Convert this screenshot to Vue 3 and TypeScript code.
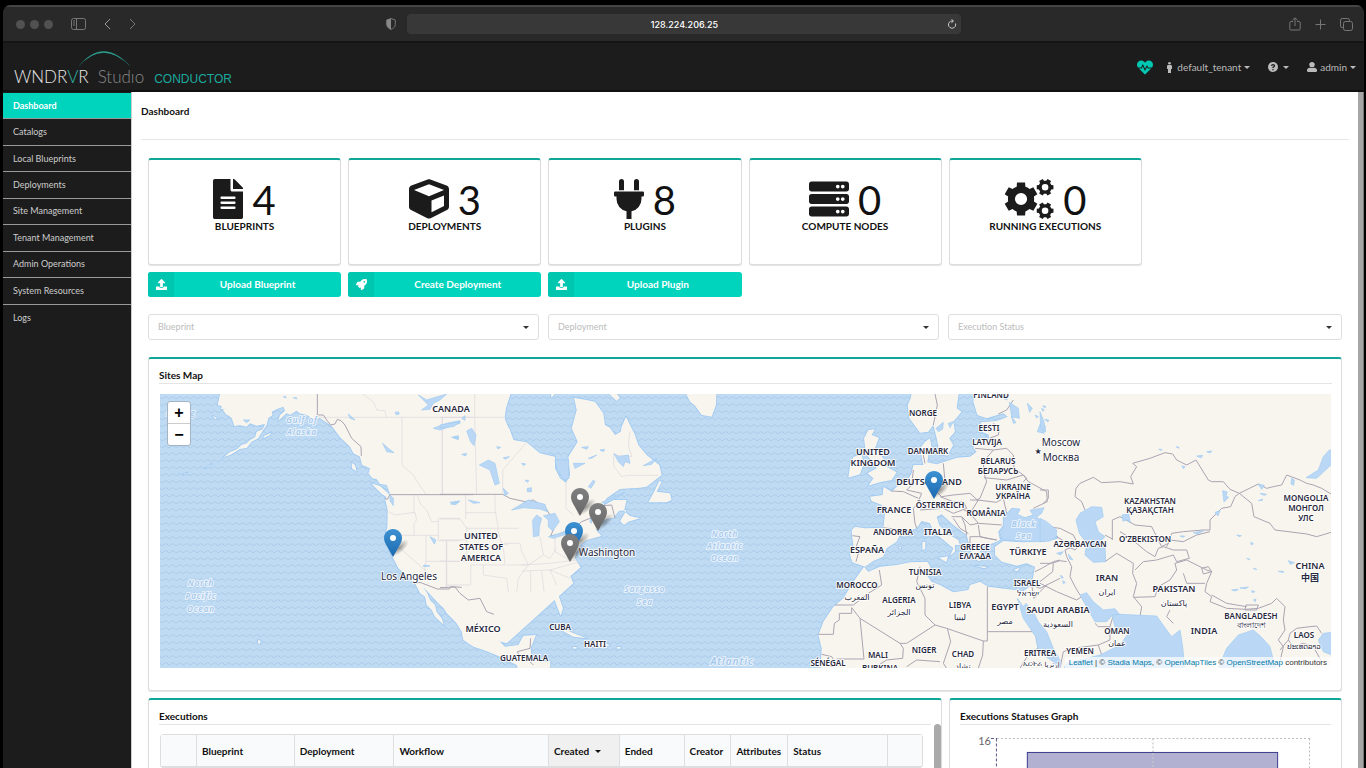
<script setup lang="ts">
import { ref } from 'vue'

interface Label { x: number; y: number; lines: string[]; size?: number; kind?: string; gap?: number }
interface Sheet { transform: string; paths: string[] }

const navItems = ['Dashboard', 'Catalogs', 'Local Blueprints', 'Deployments', 'Site Management', 'Tenant Management', 'Admin Operations', 'System Resources', 'Logs']

/* Closed outline of a toothed wheel with a round hole. */
function gear(cx: number, cy: number, outer: number, root: number, hole: number, turn: number): string {
  const teeth = 6
  const pts: string[] = []
  for (let i = 0; i < teeth; i++) {
    const a = turn + (i * 2 * Math.PI) / teeth
    const shape: [number, number][] = [[-0.34, root], [-0.24, outer], [0.24, outer], [0.34, root], [0.52, root]]
    for (const [d, r] of shape) {
      pts.push(`${(cx + r * Math.sin(a + d)).toFixed(1)} ${(cy - r * Math.cos(a + d)).toFixed(1)}`)
    }
  }
  return `M${pts.join('L')}ZM${cx - hole} ${cy}a${hole} ${hole} 0 1 0 ${hole * 2} 0a${hole} ${hole} 0 1 0 ${-hole * 2} 0Z`
}

function rack(y: number): string {
  return `M480 ${y + 128}H32c-17.700 0-32-14.300-32-32V${y + 32}c0-17.700 14.300-32 32-32h448c17.700 0 32 14.300 32 32v64c0 17.700-14.300 32-32 32zm-48-88c-13.300 0-24 10.700-24 24s10.700 24 24 24 24-10.700 24-24-10.700-24-24-24zm-64 0c-13.300 0-24 10.700-24 24s10.700 24 24 24 24-10.700 24-24-10.700-24-24-24z`
}

const uploadIcon = 'M296 384h-80c-13.300 0-24-10.700-24-24V192h-87.700c-17.800 0-26.700-21.500-14.100-34.100L242.300 5.700c7.500-7.500 19.800-7.500 27.300 0l152.200 152.200c12.600 12.600 3.700 34.100-14.100 34.100H320v168c0 13.300-10.700 24-24 24zm216-8v112c0 13.300-10.700 24-24 24H24c-13.300 0-24-10.700-24-24V376c0-13.300 10.700-24 24-24h136v8c0 30.900 25.100 56 56 56h80c30.900 0 56-25.100 56-56v-8h136c13.300 0 24 10.700 24 24z'
const rocketIcon = 'M505.100 19.100c-1.200-5.500-6.600-11-12.200-12.200C460.700 0 435.500 0 410.400 0 307.200 0 245.300 55.200 199 128H94.800c-16.300 0-35.500 11.900-42.900 26.500L2.500 253.300A28.400 28.400 0 0 0 0 264a24 24 0 0 0 24 24h103.800l-22.500 22.500c-11.300 11.300-13 32.200 0 45.200l50.900 50.900c11.200 11.200 32.200 13.200 45.300 0l22.500-22.400V488a24 24 0 0 0 24 24 28.600 28.600 0 0 0 10.700-2.500l98.700-49.400c14.600-7.300 26.500-26.500 26.500-42.900V312.800c72.600-46.300 128.100-108.400 128.100-211.100.1-25.200.1-50.400-6.900-82.600zM384 168a40 40 0 1 1 40-40 40 40 0 0 1-40 40z'

const stats = [
  { label: 'BLUEPRINTS', value: 4, w: 384, path: 'M224 136V0H24C10.700 0 0 10.700 0 24v464c0 13.300 10.700 24 24 24h336c13.300 0 24-10.700 24-24V160H248c-13.200 0-24-10.800-24-24zm64 236c0 6.600-5.400 12-12 12H108c-6.600 0-12-5.400-12-12v-8c0-6.600 5.400-12 12-12h168c6.600 0 12 5.400 12 12v8zm0-64c0 6.600-5.400 12-12 12H108c-6.600 0-12-5.400-12-12v-8c0-6.600 5.400-12 12-12h168c6.600 0 12 5.400 12 12v8zm0-72v8c0 6.600-5.400 12-12 12H108c-6.600 0-12-5.400-12-12v-8c0-6.600 5.400-12 12-12h168c6.600 0 12 5.400 12 12zm96-114.100v6.100H256V0h6.100c6.400 0 12.500 2.500 17 7l97.900 98c4.500 4.500 7 10.600 7 16.900z' },
  { label: 'DEPLOYMENTS', value: 3, w: 512, path: 'M239.100 6.300l-208 78c-18.700 7-31.100 25-31.100 45v225.100c0 18.200 10.300 34.800 26.500 42.900l208 104c13.500 6.800 29.400 6.800 42.900 0l208-104c16.300-8.100 26.500-24.800 26.500-42.900V129.300c0-20-12.400-37.900-31.100-44.900l-208-78C262 2.200 250 2.200 239.100 6.300zM256 68.400l192 72v1.100l-192 78-192-78v-1.100l192-72zm32 356V275.500l160-65v133.900l-160 80z' },
  { label: 'PLUGINS', value: 8, w: 384, path: 'M320 32a32 32 0 0 0-64 0v112h64zM368 160H16a16 16 0 0 0-16 16v32a16 16 0 0 0 16 16h16v32a160 160 0 0 0 128 156.800V512h64v-99.200A160 160 0 0 0 352 256v-32h16a16 16 0 0 0 16-16v-32a16 16 0 0 0-16-16zM128 32a32 32 0 0 0-64 0v112h64z' },
  { label: 'COMPUTE NODES', value: 0, w: 512, path: rack(32) + rack(192) + rack(352) },
  { label: 'RUNNING EXECUTIONS', value: 0, w: 640, path: gear(218, 256, 218, 168, 78, 0) + gear(526, 106, 110, 84, 42, Math.PI / 6) + gear(526, 406, 110, 84, 42, Math.PI / 6) }
]

const actions = [
  { label: 'Upload Blueprint', icon: uploadIcon },
  { label: 'Create Deployment', icon: rocketIcon },
  { label: 'Upload Plugin', icon: uploadIcon }
]

const filters = ['Blueprint', 'Deployment', 'Execution Status']
const chosen = ref<string[]>(['', '', ''])
const address = ref('128.224.206.25')

const pacific = 'translate(-20 -44) scale(.33333)'
const atlantic = 'translate(280 -9) scale(.33333)'
const europe = 'translate(580 -9) scale(.33333)'
const asia = 'translate(880 -44) scale(.33333)'

const land: Sheet[] = [
  { transform: pacific, paths: [
    'M248 100L236 150 233 165 245 168 243 178 262 176 257 190 275 205 283 228 300 226 320 230 330 220 350 227 375 222 368 238 350 245 345 262 330 270 320 280 305 284 290 298 270 306 250 322 272 314 300 297 320 294 335 275 355 265 360 255 380 225 385 205 398 195 395 185 410 178 430 170 435 182 420 195 415 212 440 190 450 195 470 182 478 190 500 195 520 208 540 205 575 228 600 262 630 290 640 310 660 320 666 345 690 355 685 370 697 385 710 388 720 402 740 405 750 432 735 445 743 480 742 530 735 560 755 615 775 655 800 678 825 700 840 730 855 740 860 765 875 780 885 800 912 826 905 805 890 785 885 765 870 750 862 730 850 712 870 715 880 740 905 765 920 790 950 820 975 850 1100 880 1300 700 1050 100Z',
    'M693 400L720 408 745 430 748 446 725 432Z', 'M635 338L645 345 650 365 636 355Z', 'M218 198L232 203 225 207Z', 'M370 265L390 255 393 248 372 258Z', 'M248 180l12-5 12 8-10 14z', 'M354 870l8 2-2 10-6-2z', 'M195 355l20-13-5 6z', 'M130 372l12-4-6 5z'
  ] },
  { transform: atlantic, paths: [
    'M-150 0L-150 500 0 660 35 690 65 740 70 765 100 785 130 795 180 815 230 840 240 880 330 880 331 828 305 830 275 820 272 790 288 750 250 752 235 780 195 785 175 765 160 720 158 670 165 655 190 635 210 628 225 636 250 632 270 640 285 625 315 620 340 628 347 655 362 692 369 670 352 620 358 600 395 570 422 547 405 520 410 500 420 480 440 465 485 453 468 435 490 405 520 398 537 378 560 375 540 408 552 420 565 410 600 400 570 393 552 378 560 345 520 345 490 362 500 340 540 312 600 308 620 305 665 270 658 240 620 210 595 180 585 150 575 130 558 95 545 125 542 140 525 150 510 128 495 120 490 85 465 50 440 45 402 38 410 75 395 130 413 170 385 215 390 270 378 293 360 280 345 250 345 215 300 205 260 172 220 165 208 130 190 125 198 70 220 0Z',
    'M658 288L665 290 650 320 690 325 695 345 680 352 625 352 640 325Z', 'M735 20L750 50 765 62 785 90 815 95 828 60 830 0 735 0Z', 'M335 715L372 720 390 740 440 760 400 755 375 742Z', 'M445 768L490 770 510 782 470 787 435 785Z', 'M500 20L530 48 540 38 525 20Z', 'M530 786l12 0 0 5-12 0z', 'M398 786l12 0 0 5-12 0z', 'M330 20l20 0-15 18z'
  ] },
  { transform: europe, paths: [
    'M520 0L512 40 503 60 508 100 540 143 565 140 580 120 590 160 600 208 622 212 640 180 628 160 645 140 640 110 665 80 650 70 660 0Z',
    'M705 0L700 50 712 90 740 100 790 85 803 95 770 108 722 112 725 140 747 150 745 165 705 165 700 190 710 200 690 215 650 218 620 228 590 238 562 232 566 205 575 190 570 160 555 170 540 190 545 215 550 240 520 240 515 265 500 290 470 305 455 320 430 305 428 330 390 335 395 348 425 360 435 385 430 428 375 430 345 425 335 435 337 460 340 480 330 510 337 532 360 540 375 545 400 528 430 515 440 490 470 470 480 450 500 440 530 430 545 408 570 415 580 440 610 465 640 490 630 512 645 500 645 480 660 480 655 465 620 445 598 420 590 395 605 388 640 420 680 450 690 490 700 520 720 530 728 510 712 490 745 480 770 470 780 465 775 440 790 420 790 395 815 370 840 375 830 390 850 400 880 390 960 460 960 0Z',
    'M765 485L790 468 850 472 960 460 960 880 240 880 245 790 235 750 250 710 280 665 310 640 340 590 372 545 385 560 420 545 470 540 510 532 562 530 572 545 560 570 575 590 600 600 640 622 685 615 690 600 720 590 745 605 800 612 850 618 875 600 885 545 860 535 830 542 785 530 765 510Z',
    'M385 135L405 133 395 150 417 158 405 190 430 220 440 245 470 262 455 285 420 292 385 302 400 280 382 265 410 250 395 225 378 210 372 160Z', 'M340 215L365 210 372 235 360 268 325 278 330 240Z',
    'M596 518l28-4-5 18z', 'M547 470l9 0 0 22-9 3z', 'M550 440l5 0-2 18z', 'M705 542l38 4-10 4z', 'M820 555l20-8-8 12z', 'M475 488l8-3 0 6z'
  ] },
  { transform: asia, paths: ['M55 100H900V980H55Z'] }
]

const water: Sheet[] = [
  { transform: pacific, paths: [
    'M835 135L860 150 920 132 900 150 880 160 870 178 845 180 865 165Z', 'M880 235L920 220 960 212 960 220 900 240Z', 'M728 280L745 295 762 308 740 305Z', 'M750 435l10 10 0 22-10-15z', 'M870 560l18 10-5 12z', 'M765 188l10-3 3 7-8 3z', 'M625 192l20 18-15-5z', 'M932 462l25-6-10 8z', 'M935 262l20-5 0 12z', 'M852 645l18 3-20 2z', 'M430 140l8 0 0 4z', 'M460 143l10 0 0 4z', 'M310 210l20 0-10 8z'
  ] },
  { transform: atlantic, paths: [
    'M80 138L95 130 108 150 102 182 92 170Z', 'M118 240L145 225 165 235 178 295 165 300 150 255Z', 'M190 310L205 325 195 332Z', 'M215 375L265 345 315 358 322 380 300 372 250 368Z', 'M280 455L278 405 290 390 305 400 298 425 297 452Z', 'M310 392L345 385 358 410 338 438 325 425 325 405Z', 'M325 455L375 440 378 448 340 460Z', 'M380 432l35-8 5 8z', 'M345 225L350 250 370 285 387 280 385 225Z', 'M445 305l15-20 5 5-12 20z', 'M522 205L535 215 565 210 570 235 555 230 550 245 535 230Z', 'M400 235l35 0-30 15z', 'M445 220l25-10-15 10z', 'M30 352l30-4-20 6z', 'M85 345l35 8-20 2z', 'M42 155l15 2-8 4z', 'M65 208l15-3-3 8z', 'M190 218l18-3-12 8z', 'M170 185l12 2-8 5z', 'M262 310l12-2 0 12-12 0z', 'M0 120L60 110 40 125 0 128Z', 'M65 100l10-8 0 14z', 'M425 187l20-2-5 8z', 'M480 195l14-2-4 7z', 'M610 242l40-22-15 18z', 'M245 235l12 2-6 5z', 'M255 285l12 2-6 5z', 'M450 410l3-20 3 0-2 25z', 'M485 352l70-30-35 22-25 12z'
  ] },
  { transform: europe, paths: [
    'M832 640L850 665 858 655 885 690 895 710 920 740 940 790 962 830 962 865 940 830 895 800 887 755 850 700Z', 'M790 400L815 370 840 372 832 388 855 398 880 390 870 376 912 368 905 385 890 396 945 440 948 462 900 470 850 470 790 465 777 440 790 425Z', 'M808 52L835 70 838 100 815 95Z', 'M862 55l15 15-8 12z', 'M588 130L610 112 608 132 595 140Z', 'M625 115l15-5-10 18z', 'M900 118l16 5-4 22-20-5z', 'M885 90l10 5-5 4z', 'M905 70l8 5-5 4z', 'M770 30l15-10 20 0-5 25z', 'M735 145l8 12-6 5z', 'M814 93l14 20-8 2z'
  ] },
  { transform: asia, paths: [
    'M108 510L120 490 155 470 185 472 190 500 165 515 175 545 195 560 180 575 195 590 197 635 160 637 135 615 140 580 118 550Z', 'M120 735L140 728 160 755 190 780 225 776 240 795 216 797 200 815 165 815 145 780Z', 'M216 795L240 793 350 798 380 840 395 860 420 840 428 890 437 980 60 980 80 940 180 915 240 885 265 850 225 832Z', 'M525 980L545 930 560 895 595 855 640 840 665 862 690 890 700 930 715 980Z', 'M835 870L850 850 900 845 900 925 850 905Z', 'M868 300L900 300 873 345 830 385 798 383 835 360 850 320Z', 'M246 495l20-3 5 25-12-8-10 5z', 'M470 318l18-2-5 8z', 'M500 305l16-2-6 6z', 'M425 348l10 2-4 6z', 'M0 185l12 30 5 30-15-12z', 'M8 168l8 0 0 6z', 'M14 208l12 2-2 6z', 'M548 422l14 4-4 12 8 4-14 14z', 'M525 487l15-5-6 16z', 'M655 403l18 3-8 12z', 'M755 385l8 5-2 16-8-4z', 'M660 430l20 3-8 3z', 'M655 452l12-5 0 4z', 'M460 548l32-6-20 10z', 'M420 558l14 0-4 4z', 'M745 632l18 6-12 5z', 'M715 664l15 0 0 4z', 'M590 555l14 2-6 3z', 'M632 576l8 5-6 4z', 'M575 720l20-2-8 5z', 'M600 714l25-3-8 5z', 'M635 722l10 3-8 3z', 'M640 750l8-3-2 8z', 'M85 612l14 18-10-3z', 'M62 675l8 8-6 2z', 'M68 692l8 5-6 4z', 'M356 298l9 0 0 4z', 'M408 290l9 2 0 3z', 'M640 655l9 2 0 3z', 'M620 625l9 2 0 3z', 'M0 505L20 515 50 540 48 562 30 573 0 575Z', 'M50 610l20-5-8 10z'
  ] }
]

const states: Sheet[] = [
  { transform: pacific, paths: ['M533 202H1000', 'M786 202V345L820 375 835 400 857 432', 'M907 202V432', 'M668 132L700 155 710 180 735 182 740 202', 'M822 436V490', 'M745 485L765 495 825 487 830 510 822 520V556', 'M735 556H895', 'M833 436L840 460 860 480 875 515 895 515', 'M895 505V572H960', 'M895 505H960', 'M858 556V632', 'M775 590L860 665', 'M919 572V715', 'M858 634H960', 'M858 632L850 690'] },
  { transform: atlantic, paths: ['M0 97H192', 'M7 97V328', 'M104 97L110 328', 'M104 0V97', 'M188 328V255L260 172', 'M378 293V370L400 390', 'M77 330V402', 'M77 383H170', 'M0 402H60L80 430', 'M165 330V375L175 430H235', 'M80 430H172L185 475 205 480', 'M80 425V465H0', 'M80 465V530L0 528', 'M20 467V605', 'M80 487H190L195 540 H92V600H20', 'M130 540V570L200 580 205 620', 'M190 475H240L245 500 265 540 235 580 230 620', 'M200 540H262', 'M245 558L330 555 420 530', 'M245 540L330 535 410 525', 'M272 558V620', 'M305 558L312 620', 'M330 555L350 600', 'M300 455L310 510 330 520 350 490', 'M345 458V500L380 520', 'M390 445V475', 'M570 140L565 180 575 215 520 210 522 245 545 275 570 270', 'M570 271H655', 'M330 555L390 580', 'M265 540L310 510'] }
]

const borders: Sheet[] = [
  { transform: pacific, paths: ['M532 132V195L550 195 560 210 572 225 585 222 592 208 603 212 615 225 635 265 663 290 664 318', 'M735 445L742 448 750 434 1000 434', 'M822 700L840 697 892 717 928 717 932 710 965 712'] },
  { transform: atlantic, paths: ['M0 328H188L210 340 255 350 280 345 318 370 330 390 340 435 332 452 350 450 400 430 425 410 450 400 490 390', 'M490 362L515 360 525 400', 'M0 608L45 606 60 625 85 645 120 640 140 680 162 688', 'M232 800L270 790 272 760M262 822L280 840M232 800L240 815'] },
  { transform: europe, paths: [
    'M585 27L592 60 580 120', 'M820 45L800 75 775 87', 'M760 115L778 130 775 150 748 160', 'M705 190L760 195 800 190 820 210 822 250 850 270 860 280 850 290', 'M760 195L730 230 732 265 740 290 720 340 710 345', 'M732 278L800 285 850 270 865 290 920 320 922 350 880 370', 'M610 235L615 290 590 320 605 335 640 330 690 325 712 345 770 352 790 340 800 385', 'M520 255L515 300 500 315 545 325 530 360 520 370 525 415 530 430', 'M455 318L490 320 535 340', 'M430 428L520 440', 'M337 452L360 455 350 480 355 505 348 530', 'M600 335L640 350 670 350 680 370 640 385 610 370 540 375', 'M690 345L715 345 690 385 672 375', 'M690 385L715 415 785 420', 'M635 395L665 395 675 420 680 450M640 400L660 430 685 445M665 395L690 420 715 415M715 420L720 455 770 465M690 455L720 455 740 460 770 465M690 455L690 475', 'M550 210L555 235',
    'M418 555L425 600 385 625 340 660 H285', 'M335 668V685H298V705L283 715 280 748H235', 'M335 668L360 700 480 775 500 775 585 720 555 690 555 640 530 590 540 545', 'M360 700L372 822H290', 'M480 775L490 790 488 820 440 825 400 850', 'M585 720L620 730 730 768M742 605V740H885M742 740V768L730 768 728 810 715 850', 'M622 730L632 770 610 835 620 850', 'M500 845L530 825 600 830', 'M885 740L895 790 870 800 840 850', 'M885 560L905 550 940 530 960 525', 'M875 600L900 610 960 580M875 600L882 640 900 620 920 600', 'M245 808L275 815 290 840', 'M240 835L280 845'
  ] },
  { transform: asia, paths: [
    'M135 480L125 455 105 440 108 415 120 400 160 382 185 398 240 395 280 402 272 380 290 350 278 340 330 325 375 308 398 312 410 330 440 345 468 330 505 390 515 395 550 395 570 418 598 430 585 440 572 470 545 475 510 510 510 540 490 540 430 545 395 550 385 580 365 590 350 560 335 530 285 525 240 500 217 510V570', 'M598 430L655 402 680 415 700 410 725 405 740 375 780 390 800 400 820 405 845 415 873 432', 'M598 430L635 460 642 500 690 520 705 540 800 552 830 560 873 547', 'M195 635L230 610 280 640 278 670 290 700 280 740 305 770 300 800', 'M240 545L265 560 320 605 345 620 355 595 370 590 400 600 440 600 448 625 410 635 400 615 350 630 310 635 285 660', 'M195 555L217 567', 'M510 545L470 555 430 575 390 570 380 590', 'M280 742L345 740 355 710 390 690 410 660 405 640 440 630 490 655 500 660 515 665 500 700 495 725 515 740 510 755 560 775 615 778 655 775 695 760 710 745 735 770 730 810 735 840 715 870 730 890 720 935', 'M515 735L560 760 620 770M618 765H655L650 780H615Z', 'M390 780L380 800 400 820', 'M430 670L440 700 495 700', 'M485 655L505 650 515 665 490 672Z', 'M50 560L75 575 100 590 75 600 80 620 95 650 90 680 105 710 120 735', 'M0 640L35 640 60 632 80 635M40 640L38 665 0 695M0 700L50 725 110 750 125 740', 'M20 530L60 535 100 555 110 575M75 575L110 590M85 590L105 600 120 585', 'M0 420L25 420 25 445 10 460', 'M165 820L175 830 210 830 218 802M210 830V870L175 885 100 895 70 905 60 955M175 885L185 915', 'M750 850L770 835 810 830 830 828 845 850M750 850L745 870 760 890 790 880 820 890 845 935M745 870L720 900'
  ] }
]

const labels: Label[] = [
  { x: 451, y: 412, lines: ['CANADA'], size: 9 },
  { x: 481, y: 539, lines: ['UNITED', 'STATES OF', 'AMERICA'], size: 9, gap: 11 },
  { x: 483, y: 632, lines: ['MÉXICO'], size: 9 },
  { x: 524, y: 661, lines: ['GUATEMALA'] },
  { x: 560, y: 630, lines: ['CUBA'] },
  { x: 595, y: 647, lines: ['HAITI'] },
  { x: 409, y: 580, lines: ['Los Angeles'], size: 10, kind: 'city' },
  { x: 607, y: 556, lines: ['Washington'], size: 10, kind: 'city' },
  { x: 873, y: 455, lines: ['UNITED', 'KINGDOM'], size: 9, gap: 11 },
  { x: 923, y: 416, lines: ['NORGE'] },
  { x: 991, y: 398, lines: ['FINLAND'] },
  { x: 989, y: 431, lines: ['EESTI'] },
  { x: 987, y: 445, lines: ['LATVIJA'] },
  { x: 928, y: 454, lines: ['DANMARK'] },
  { x: 998, y: 464, lines: ['BELARUS', 'БЕЛАРУСЬ'], gap: 10 },
  { x: 929, y: 485, lines: ['DEUTSCHLAND'], size: 9 },
  { x: 1013, y: 490, lines: ['UKRAINE', 'УКРАЇНА'], gap: 9 },
  { x: 940, y: 508, lines: ['ÖSTERREICH'] },
  { x: 894, y: 513, lines: ['FRANCE'], size: 9 },
  { x: 986, y: 516, lines: ['ROMÂNIA'] },
  { x: 893, y: 535, lines: ['ANDORRA'] },
  { x: 938, y: 535, lines: ['ITALIA'], size: 9 },
  { x: 867, y: 553, lines: ['ESPAÑA'], size: 9 },
  { x: 975, y: 550, lines: ['GREECE', 'ΕΛΛΆΔΑ'], gap: 9 },
  { x: 1028, y: 555, lines: ['TÜRKIYE'], size: 9 },
  { x: 1080, y: 547, lines: ['AZƏRBAYCAN'] },
  { x: 1061, y: 446, lines: ['Moscow', 'Москва'], size: 10, kind: 'city', gap: 15 },
  { x: 1038, y: 454, lines: ['★'], size: 8, kind: 'star' },
  { x: 925, y: 575, lines: ['TUNISIA'] },
  { x: 925, y: 588, lines: ['تونس'], kind: 'arabic' },
  { x: 857, y: 588, lines: ['MOROCCO'] },
  { x: 857, y: 600, lines: ['المغرب'], kind: 'arabic' },
  { x: 899, y: 603, lines: ['ALGERIA'] },
  { x: 899, y: 615, lines: ['الجزائر'], kind: 'arabic' },
  { x: 960, y: 608, lines: ['LIBYA'] },
  { x: 960, y: 620, lines: ['ليبيا'], kind: 'arabic' },
  { x: 1005, y: 610, lines: ['EGYPT'], size: 9 },
  { x: 1005, y: 624, lines: ['مصر'], kind: 'arabic' },
  { x: 1027, y: 586, lines: ['ISRAEL'] },
  { x: 1028, y: 596, lines: ['ישראל'], kind: 'arabic' },
  { x: 1058, y: 613, lines: ['SAUDI ARABIA'], size: 9 },
  { x: 1058, y: 627, lines: ['السعودية'], kind: 'arabic' },
  { x: 924, y: 653, lines: ['NIGER'] },
  { x: 878, y: 658, lines: ['MALI'] },
  { x: 880, y: 671, lines: ['BURKINA'] },
  { x: 963, y: 657, lines: ['CHAD'] },
  { x: 963, y: 669, lines: ['تشاد'], kind: 'arabic' },
  { x: 828, y: 666, lines: ['SÉNÉGAL'] },
  { x: 1040, y: 656, lines: ['ERITREA'] },
  { x: 1032, y: 666, lines: ['ኤርትራ'], size: 7, kind: 'arabic' },
  { x: 1052, y: 667, lines: ['إرتريا'], size: 7, kind: 'arabic' },
  { x: 1080, y: 654, lines: ['YEMEN'] },
  { x: 1117, y: 634, lines: ['OMAN'] },
  { x: 1117, y: 646, lines: ['عمان'], kind: 'arabic' },
  { x: 1107, y: 581, lines: ['IRAN'], size: 9 },
  { x: 1107, y: 595, lines: ['ایران'], kind: 'arabic' },
  { x: 1174, y: 592, lines: ['PAKISTAN'], size: 9 },
  { x: 1174, y: 606, lines: ['پاکستان'], kind: 'arabic' },
  { x: 1204, y: 634, lines: ['INDIA'], size: 9 },
  { x: 1251, y: 619, lines: ['BANGLADESH'] },
  { x: 1251, y: 628, lines: ['বাংলাদেশ'], kind: 'arabic' },
  { x: 1304, y: 638, lines: ['LAOS'] },
  { x: 1304, y: 649, lines: ['ປະເທດລາວ'], size: 7, kind: 'arabic' },
  { x: 1310, y: 569, lines: ['CHINA', '中国'], size: 9, gap: 12 },
  { x: 1306, y: 501, lines: ['MONGOLIA', 'МОНГОЛ', 'УЛС'], gap: 10 },
  { x: 1150, y: 504, lines: ['KAZAKHSTAN', 'ҚАЗАҚСТАН'], gap: 9 },
  { x: 1145, y: 542, lines: ["O'ZBEKISTON"] },
  { x: 302, y: 423, lines: ['Gulf of', 'Alaska'], kind: 'sea-name', gap: 12 },
  { x: 181, y: 416, lines: ['Bering'], kind: 'sea-name' },
  { x: 201, y: 586, lines: ['North', 'Pacific', 'Ocean'], kind: 'sea-name', gap: 13 },
  { x: 725, y: 537, lines: ['North', 'Atlantic', 'Ocean'], kind: 'sea-name', gap: 12 },
  { x: 645, y: 592, lines: ['Sargasso', 'Sea'], kind: 'sea-name', gap: 13 },
  { x: 1024, y: 527, lines: ['Black', 'Sea'], kind: 'sea-name', gap: 12 },
  { x: 732, y: 665, lines: ['Atlantic'], size: 10, kind: 'sea-name' }
]

const pins = [
  { x: 393, y: 557, tone: 'blue' },
  { x: 580, y: 516, tone: 'grey' },
  { x: 598, y: 531, tone: 'grey' },
  { x: 574, y: 550, tone: 'blue' },
  { x: 570, y: 562, tone: 'grey' },
  { x: 934, y: 499, tone: 'blue' }
]

const columns = [
  { name: '', w: 35 }, { name: 'Blueprint', w: 98 }, { name: 'Deployment', w: 100 }, { name: 'Workflow', w: 155 },
  { name: 'Created', w: 71 }, { name: 'Ended', w: 65 }, { name: 'Creator', w: 47 }, { name: 'Attributes', w: 57 },
  { name: 'Status', w: 100 }, { name: '', w: 35 }
]
</script>

<template>
  <div class="screen">
    <div class="window">
      <header class="chrome">
        <div class="chrome-left">
          <i class="dot"></i><i class="dot"></i><i class="dot"></i>
          <button class="plain side" aria-label="Toggle sidebar">
            <svg width="15" height="12" viewBox="0 0 15 12"><rect x=".5" y=".5" width="14" height="11" rx="2" /><path d="M5.500.5v11M2 3h2M2 5h2M2 7h2" /></svg>
          </button>
          <button class="plain back" aria-label="Back"><svg width="8" height="12" viewBox="0 0 8 12"><path d="M6 1L1 6l5 5" /></svg></button>
          <button class="plain forward" aria-label="Forward"><svg width="8" height="12" viewBox="0 0 8 12"><path d="M1 1l5 5-5 5" /></svg></button>
        </div>
        <div class="chrome-center">
          <svg class="shield" width="10" height="12" viewBox="0 0 10 12"><path d="M5 .6L9.300 2v4.500C9.300 9 7 10.600 5 11.400 3 10.600.7 9 .7 6.500V2z" /><path class="half" d="M5 .6v10.800C3 10.600.7 9 .7 6.500V2z" /></svg>
          <div class="address">
            <input v-model="address" type="text" aria-label="Address" />
            <button class="plain reload" aria-label="Reload"><svg width="10" height="10" viewBox="0 0 10 10"><path d="M8.500 4.500A3.600 3.600 0 1 1 5 2h1M4.500.3L6.500 2 4.500 3.800" /></svg></button>
          </div>
        </div>
        <div class="chrome-right">
          <button class="plain" aria-label="Share"><svg width="12" height="14" viewBox="0 0 12 14"><path d="M4 4.500H2a1.200 1.200 0 0 0-1.200 1.200v6A1.200 1.200 0 0 0 2 13h8a1.200 1.200 0 0 0 1.200-1.200v-6A1.200 1.200 0 0 0 10 4.500H8M6 9V1M3.500 3.200L6 .8l2.500 2.400" /></svg></button>
          <button class="plain" aria-label="New tab"><svg width="11" height="11" viewBox="0 0 11 11"><path d="M5.500.5v10M.5 5.500h10" /></svg></button>
          <button class="plain" aria-label="Tabs"><svg width="13" height="13" viewBox="0 0 13 13"><rect x="3.500" y="3.500" width="9" height="9" rx="2" /><path d="M3.500 9.500H2.200A1.700 1.700 0 0 1 .5 7.800V2.200A1.700 1.700 0 0 1 2.200.5h5.600a1.700 1.700 0 0 1 1.700 1.700v1.300" /></svg></button>
        </div>
      </header>

      <div class="appbar">
        <a class="brand" href="#">
          <svg class="arc" width="56" height="18" viewBox="0 0 56 18"><path d="M1 17Q26-14.500 54 17 26-11.500 1 17z" /></svg>
          <span class="word">WNDR<span class="vee">V</span>R</span>
          <span class="studio">Studıo</span>
          <span class="product">CONDUCTOR</span>
        </a>
        <div class="tools">
          <svg class="heart" width="16" height="15" viewBox="0 24 512 464"><path d="M320.200 243.800l-49.700 99.400c-6 12.100-23.400 11.700-28.900-.6l-56.900-126.300-30 71.700H60.600l182.500 186.500c7.100 7.300 18.600 7.300 25.700 0L451.400 288H342.300l-22.100-44.200zM473.700 73.900l-2.400-2.500c-51.500-52.600-135.800-52.600-187.400 0L256 100l-27.900-28.500c-51.500-52.700-135.900-52.700-187.400 0l-2.400 2.400C-10.400 123.700-12.500 203 31 256h102.400l35.900-86.200c5.400-12.900 23.600-13.100 29.400-.4l58.200 129.300 49-97.900c5.900-11.800 22.700-11.800 28.600 0l27.600 55.200H481c43.500-53 41.400-132.300-7.300-182.100z" /></svg>
          <button class="menu tenant"><svg width="5" height="11" viewBox="0 0 5 11"><circle cx="2.500" cy="1.300" r="1.300" /><path d="M1.200 3h2.600A1.200 1.200 0 0 1 5 4.200V7H4v4H1V7H0V4.200A1.200 1.200 0 0 1 1.200 3z" /></svg><span>default_tenant</span><i class="caret"></i></button>
          <button class="menu help" aria-label="Help"><svg width="10" height="10" viewBox="0 0 10 10"><circle cx="5" cy="5" r="5" /><path class="mark" d="M3.500 3.900Q3.700 2.600 5 2.600q1.500 0 1.500 1.200Q6.500 4.600 5 5.400V6M5 7v1.200" /></svg><i class="caret"></i></button>
          <button class="menu user"><svg width="10" height="10" viewBox="0 0 448 512" preserveAspectRatio="none"><path d="M224 272c70.700 0 124-61 124-136S294.700 0 224 0 100 57.300 100 136s53.300 136 124 136zm89.600 16h-16.700c-22.200 10.200-46.900 16-72.900 16s-50.600-5.800-72.900-16h-16.700C60.200 288 0 348.200 0 422.400V464c0 26.500 21.500 48 48 48h352c26.500 0 48-21.500 48-48v-41.600c0-74.200-60.200-134.400-134.400-134.400z" /></svg><span>admin</span><i class="caret"></i></button>
        </div>
      </div>

      <div class="body">
        <nav class="sidebar">
          <ul>
            <li v-for="(item, i) in navItems" :key="item" :class="{ active: i === 0 }"><a href="#">{{ item }}</a></li>
          </ul>
        </nav>

        <main class="content">
          <h1>Dashboard</h1>
          <div class="widgets">
            <section v-for="s in stats" :key="s.label" class="card stat">
              <div class="figure">
                <svg :viewBox="`0 0 ${s.w} 512`" :width="s.w * 40 / 512" height="40"><path fill-rule="evenodd" :d="s.path" /></svg>
                <span>{{ s.value }}</span>
              </div>
              <p>{{ s.label }}</p>
            </section>
            <i></i>
            <button v-for="a in actions" :key="a.label" class="action">
              <span class="action-icon"><svg width="11" height="11" viewBox="0 0 512 512"><path :d="a.icon" /></svg></span>
              <span class="action-text">{{ a.label }}</span>
            </button>
          </div>

          <div class="filters">
            <div v-for="(f, i) in filters" :key="f" class="filter">
              <select v-model="chosen[i]" :aria-label="f"><option value="">{{ f }}</option></select>
              <i class="caret"></i>
            </div>
          </div>

          <section class="card map-card">
            <h2>Sites Map</h2>
            <div class="map">
              <svg viewBox="0 0 1171 274" preserveAspectRatio="xMidYMid slice">
                <defs>
                  <pattern id="waves" width="7" height="7" patternUnits="userSpaceOnUse"><path class="wave" d="M0 3Q1.700 6 3.500 4T7 3" /></pattern>
                  <linearGradient id="pin-blue" x2="0" y2="1"><stop offset="0" stop-color="#3d92d2" /><stop offset="1" stop-color="#1b69b0" /></linearGradient>
                  <linearGradient id="pin-grey" x2="0" y2="1"><stop offset="0" stop-color="#808080" /><stop offset="1" stop-color="#666" /></linearGradient>
                  <radialGradient id="shade"><stop offset="0" stop-color="#333" stop-opacity=".5" /><stop offset="1" stop-color="#333" stop-opacity="0" /></radialGradient>
                </defs>
                <rect class="sea" width="1171" height="274" />
                <rect fill="url(#waves)" width="1171" height="274" />
                <g v-for="layer in ['coast', 'land']" :key="layer" :class="layer">
                  <g v-for="s in land" :key="s.transform" :transform="s.transform"><path v-for="d in s.paths" :key="d" :d="d" /></g>
                </g>
                <g class="states"><g v-for="s in states" :key="s.transform" :transform="s.transform"><path v-for="d in s.paths" :key="d" :d="d" /></g></g>
                <g class="borders"><g v-for="s in borders" :key="s.transform" :transform="s.transform"><path v-for="d in s.paths" :key="d" :d="d" /></g></g>
                <g class="lakes"><g v-for="s in water" :key="s.transform" :transform="s.transform"><path v-for="d in s.paths" :key="d" :d="d" /></g></g>
                <g transform="translate(-160 -394)">
                  <text v-for="(l, i) in labels" :key="i" :class="l.kind || 'country'" :font-size="l.size || 8" text-anchor="middle">
                    <tspan v-for="(t, n) in l.lines" :key="n" :x="l.x" :y="l.y + n * (l.gap || 0)">{{ t }}</tspan>
                  </text>
                  <g v-for="p in pins" :key="p.x" :transform="`translate(${p.x - 9} ${p.y - 28})`">
                    <ellipse cx="15" cy="19" rx="12" ry="5" fill="url(#shade)" transform="rotate(-40 15 19)" />
                    <path :fill="`url(#pin-${p.tone})`" d="M9 0C4 0 0 4 0 9c0 2 .8 4.400 2 6.600L9 28l7-12.400C17.200 13.400 18 11 18 9c0-5-4-9-9-9z" />
                    <circle cx="9" cy="9" r="3" fill="#fff" />
                  </g>
                </g>
              </svg>
              <div class="zoom"><button aria-label="Zoom in">+</button><button aria-label="Zoom out">−</button></div>
              <div class="credit"><a href="#">Leaflet</a> | © <a href="#">Stadia Maps</a>, © <a href="#">OpenMapTiles</a> © <a href="#">OpenStreetMap</a> contributors</div>
            </div>
          </section>

          <div class="bottom">
            <section class="card executions">
              <h2>Executions</h2>
              <table>
                <colgroup><col v-for="(c, i) in columns" :key="i" :style="{ width: c.w / 7.63 + '%' }" /></colgroup>
                <thead><tr><th v-for="(c, i) in columns" :key="i" scope="col" :class="{ sorted: c.name === 'Created' }">{{ c.name }}<i v-if="c.name === 'Created'" class="caret"></i></th></tr></thead>
              </table>
              <i class="table-bar"></i>
            </section>
            <section class="card graph">
              <h2>Executions Statuses Graph</h2>
              <svg viewBox="0 0 372 40" width="100%">
                <text x="31" y="11" text-anchor="end">16</text>
                <path class="grid" d="M37 4.500H351M193.500 4.500V40M350.500 4.500V40" />
                <path class="axis" d="M31 4.500h6M36.500 4.500V40" />
                <rect x="67.500" y="18.500" width="251" height="60" />
                <path class="over" d="M193.500 19V40" />
              </svg>
            </section>
          </div>
          <i class="page-bar"></i>
        </main>
      </div>
    </div>
  </div>
</template>

<style>
html, body { margin: 0; background: #000; }
</style>

<style scoped>
* { box-sizing: border-box; }
.screen { height: 100vh; overflow: hidden; background: #000; padding: 5px 2px 0 3px; font: 10px/16px Lato, "Noto Sans", sans-serif; color: #111; }
.window { height: 100%; display: flex; flex-direction: column; border-radius: 8px 8px 0 0; overflow: hidden; background: #1c1c1c; }
button { font: inherit; margin: 0; padding: 0; border: 0; background: none; color: inherit; }
a { text-decoration: none; color: inherit; }
svg { display: block; }

.chrome { flex: none; height: 38px; display: grid; grid-template-columns: 1fr 596px 1fr; align-items: center; background: #292929; border-top: 2px solid #454545; border-bottom: 2px solid #151515; }
.plain svg, .shield { fill: none; stroke: #777; stroke-width: 1; }
.chrome-left { display: flex; align-items: center; gap: 5px; padding-left: 13px; }
.dot { width: 9px; height: 9px; border-radius: 50%; background: #515151; }
.side { margin-left: 13px; }
.back { margin-left: 13px; }
.back svg { stroke: #999; }
.forward { margin-left: 12px; }
.chrome-center { display: flex; align-items: center; gap: 11px; padding-right: 21px; }
.shield .half { fill: #888; stroke: none; }
.address { flex: 1; display: flex; align-items: center; height: 20px; padding: 0 4px; border-radius: 4px; background: #383838; }
.address input { flex: 1; min-width: 0; border: 0; background: none; color: #fff; text-align: center; font: 500 9px Inter, sans-serif; outline: none; padding: 0 0 0 12px; }
.reload svg { stroke: #ccc; }
.chrome-right { display: flex; justify-content: flex-end; align-items: center; gap: 14px; padding-right: 11px; }

.appbar { flex: none; height: 49px; display: flex; justify-content: space-between; border-bottom: 2px solid #111; }
.brand { position: relative; display: flex; align-items: baseline; padding: 24px 0 0 11px; line-height: 20px; }
.arc { position: absolute; left: 74px; top: 7px; fill: #2a9d8f; }
.word { font-size: 17px; font-weight: 300; color: #e8e8e8; }
.vee { color: #2fb3a6; }
.studio { margin-left: 9px; font-size: 17px; font-weight: 300; color: #8a8a8a; }
.product { margin-left: 10px; font: 12px/20px "Liberation Sans", Arial, sans-serif; color: #1ba99c; }
.tools { display: flex; align-items: center; padding: 1px 8px 0 0; color: #bbb; fill: #bbb; }
.heart { fill: #00c7b1; }
.menu { display: flex; align-items: center; }
.tenant { margin-left: 14px; }
.tenant span { margin-left: 5px; }
.help, .user { margin-left: 18px; }
.user span { margin-left: 3px; }
.mark { fill: none; stroke: #1c1c1c; stroke-width: 1.300; }
.caret { display: inline-block; flex: none; border: 3px solid transparent; border-top-color: currentColor; border-bottom: 0; margin-left: 3px; }
.help .caret { margin-left: 5px; }

.body { flex: 1; min-height: 0; display: flex; }
.sidebar { flex: none; width: 128px; padding-top: 1px; color: #ccc; font-size: 9px; }
.sidebar ul { list-style: none; margin: 0; padding: 0; height: 238px; display: grid; grid-template-rows: repeat(9, 1fr); }
.sidebar li { border-bottom: 1px solid #999; }
.sidebar li:last-child { border-bottom: 0; }
.sidebar a { display: flex; align-items: center; height: 100%; padding-left: 10px; }
.sidebar .active { background: #00d4bd; color: #fff; font-weight: 700; }

.content { position: relative; flex: 1; min-width: 0; background: #fff; padding: 10px 22px 0 16px; overflow: hidden; border-left: 1px solid #ccc; }
h1 { margin: 0 -7px 18px; padding: 1px 0 20px; border-bottom: 1px solid #e6e6e6; font-size: 10px; line-height: 16px; }
.card { position: relative; background: #fff; border: 1px solid #dcdcdc; border-top: 2px solid #10a698; border-radius: 3px; box-shadow: 0 1px 1px #e4e4e4; }
.widgets { display: grid; grid-template-columns: repeat(6, 1fr); gap: 7px; }
.stat { height: 107px; padding-top: 19px; text-align: center; }
.figure { display: flex; justify-content: center; gap: 9px; height: 40px; fill: #1b1b1b; font-size: 40px; line-height: 42px; }
.stat p { margin: 0; font-weight: 700; line-height: 14px; }
.action { display: flex; height: 25px; line-height: 25px; border-radius: 3px; overflow: hidden; background: #00d4bd; color: #fff; font-weight: 700; }
.action-icon { flex: none; display: grid; place-items: center; width: 26px; height: 25px; background: #00c6b0; fill: #fff; }
.action-text { flex: 1; text-align: center; }

.filters { display: grid; grid-template-columns: 391fr 391fr 394fr; gap: 9px; margin: 17px 0; }
.filter { display: flex; align-items: center; height: 26px; padding: 0 9px; border: 1px solid #dedede; border-radius: 3px; color: #333; }
.filter select { flex: 1; appearance: none; border: 0; padding: 0; background: none; color: #bbb; font: 9px/16px Lato, sans-serif; outline: none; }

h2 { margin: 0; border-bottom: 1px solid #e4e4e4; font-size: 10px; line-height: 16px; padding-top: 8px; }
.map-card { height: 334px; padding: 0 9px 0 10px; }
.map { position: relative; margin: 10px 1px 0; height: 274px; overflow: hidden; }
.map > svg { width: 100%; height: 100%; }
.sea { fill: #bfdaf3; }
.wave { fill: none; stroke: #a8c9e8; stroke-width: .9; }
.coast { fill: none; stroke: #9fcaf2; stroke-width: 5; stroke-linejoin: round; }
.land { fill: #f8f5ee; }
.lakes { fill: #bad8f5; stroke: #9fcaf2; stroke-width: 2; }
.states { fill: none; stroke: #dcd8de; stroke-width: 2; }
.borders { fill: none; stroke: #aaa4b2; stroke-width: 3; stroke-linejoin: round; }
.map text { paint-order: stroke; stroke: #fff; stroke-opacity: .85; stroke-width: 2px; stroke-linejoin: round; fill: #28283c; }
.country { font-family: "Noto Sans", "Noto Sans CJK SC", sans-serif; font-weight: 600; }
.city { font-family: "Noto Sans", "DejaVu Sans", sans-serif; }
.star { font-family: "DejaVu Sans", sans-serif; }
.arabic { font-family: "Noto Sans", "DejaVu Sans", sans-serif; }
.map .sea-name { font-family: "Open Sans", "Noto Sans", sans-serif; font-style: italic; font-weight: 600; letter-spacing: 1px; fill: #a0c6ec; stroke-opacity: .7; }
.zoom { position: absolute; left: 7px; top: 7px; width: 24px; border: 1px solid #a5b4c2; border-radius: 3px; background: #fff; overflow: hidden; }
.zoom button { display: block; width: 100%; height: 21px; font: 700 16px/22px "Liberation Sans", Arial, sans-serif; color: #000; }
.zoom button + button { height: 22px; border-top: 1px solid #ccc; }
.credit { position: absolute; right: 0; bottom: 0; padding: 0 4px; background: rgba(255, 255, 255, .7); font: 8px/11px "Liberation Sans", Arial, sans-serif; color: #333; }
.credit a { color: #0078a8; }

.bottom { display: grid; grid-template-columns: 794fr 393fr; gap: 7px; margin-top: 7px; }
.bottom .card { height: 160px; padding: 0 10px; }
table { width: calc(100% - 9px); margin: 9px 0 0 1px; table-layout: fixed; border-collapse: separate; border-spacing: 0; border: 1px solid #dedede; border-radius: 3px; }
th { height: 32px; padding: 0 0 0 5px; text-align: left; white-space: nowrap; font-size: 10px; background: #f9fafb; border-left: 1px solid #dedede; border-bottom: 1px solid #dedede; }
th:first-child { border-left: 0; }
.sorted { background: #f0f0f0; }
th .caret { margin: 0 0 2px 6px; }
.table-bar { position: absolute; right: 0; top: 24px; bottom: 0; width: 7px; border-radius: 4px; background: #aaa; }
.graph svg { margin-top: 9px; overflow: visible; }
.graph text { font-size: 11px; fill: #666; }
.grid { fill: none; stroke: #bbb; stroke-dasharray: 2 2; }
.axis { fill: none; stroke: #55558a; stroke-dasharray: 3 2; }
.graph rect { fill: #b3b1d2; stroke: #3c3a8c; }
.over { stroke: #ccc; stroke-dasharray: 2 2; }
.page-bar { position: absolute; right: 0; top: 0; bottom: 0; width: 6px; background: #a6a6a6; border-right: 1px solid #777; }
</style>
